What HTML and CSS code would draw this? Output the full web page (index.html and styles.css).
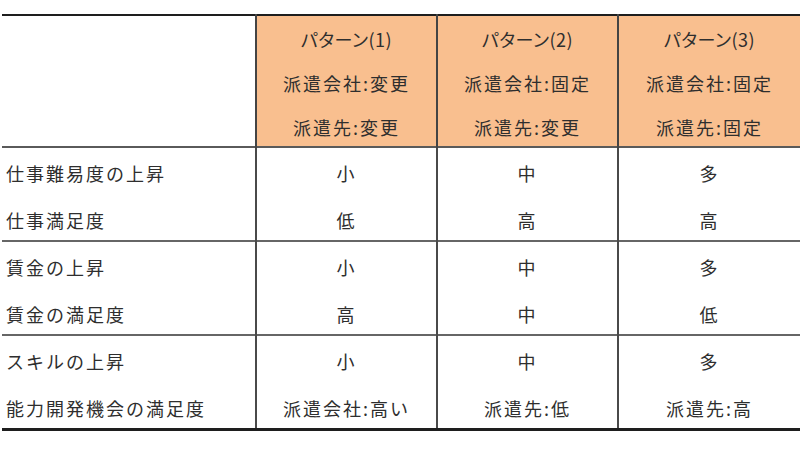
FILE: index.html
```html
<!DOCTYPE html>
<html lang="ja">
<head>
<meta charset="utf-8">
<link rel="stylesheet" href="styles.css">
</head>
<body>
<table class="cmp">
  <colgroup>
    <col class="c-label">
    <col class="c-p">
    <col class="c-p">
    <col class="c-p3">
  </colgroup>
  <thead>
    <tr>
      <th class="blank"></th>
      <th class="pat"><div class="l kana">パターン(1)</div><div class="l">派遣会社:変更</div><div class="l end">派遣先:変更</div></th>
      <th class="pat"><div class="l kana">パターン(2)</div><div class="l">派遣会社:固定</div><div class="l end">派遣先:変更</div></th>
      <th class="pat"><div class="l kana">パターン(3)</div><div class="l">派遣会社:固定</div><div class="l end">派遣先:固定</div></th>
    </tr>
  </thead>
  <tbody>
    <tr class="first"><td class="lab">仕事難易度の上昇</td><td>小</td><td>中</td><td>多</td></tr>
    <tr class="second"><td class="lab">仕事満足度</td><td>低</td><td>高</td><td>高</td></tr>
    <tr class="first"><td class="lab">賃金の上昇</td><td>小</td><td>中</td><td>多</td></tr>
    <tr class="second"><td class="lab">賃金の満足度</td><td>高</td><td>中</td><td>低</td></tr>
    <tr class="first"><td class="lab">スキルの上昇</td><td>小</td><td>中</td><td>多</td></tr>
    <tr class="second end"><td class="lab">能力開発機会の満足度</td><td>派遣会社:高い</td><td>派遣先:低</td><td>派遣先:高</td></tr>
  </tbody>
</table>
</body>
</html>
```

FILE: styles.css
```css
html, body {
  margin: 0;
  padding: 0;
  background: #ffffff;
}
body {
  padding: 14px 0 0 2px;
  font-family: "Noto Sans CJK JP", "Noto Sans", sans-serif;
  color: #2e2e2e;
}
.cmp {
  border-collapse: collapse;
  table-layout: fixed;
  width: 798px;
  font-size: 18px;
  letter-spacing: 2px;
}
.c-label { width: 254px; }
.c-p { width: 181px; }
.c-p3 { width: 182px; }
.cmp thead tr {
  border-top: 2px solid #1e1e1e;
  border-bottom: 2px solid #5a5a5a;
}
.cmp th {
  font-weight: normal;
  padding: 0;
  vertical-align: top;
}
.cmp th.pat {
  background: #f9bf8f;
  border-left: 2px solid #444444;
  text-align: center;
  padding-top: 1px;
  height: 129px;
}
.l {
  height: 44px;
  line-height: 44px;
}
.l.end {
  height: 41px;
}
.kana {
  font-feature-settings: "palt";
  letter-spacing: 0.5px;
}
.cmp td {
  padding: 0;
  text-align: center;
  border-left: 2px solid #4a4a4a;
}
.cmp td.lab {
  text-align: left;
  padding-left: 4px;
  border-left: none;
}
.cmp tr.first td {
  padding-top: 4px;
  height: 42px;
  line-height: 42px;
}
.cmp tr.second td {
  padding-top: 7px;
  height: 39px;
  line-height: 39px;
}
.cmp tr.second {
  border-bottom: 2px solid #666666;
}
.cmp tr.second.end {
  border-bottom: 3px solid #1e1e1e;
}
```
